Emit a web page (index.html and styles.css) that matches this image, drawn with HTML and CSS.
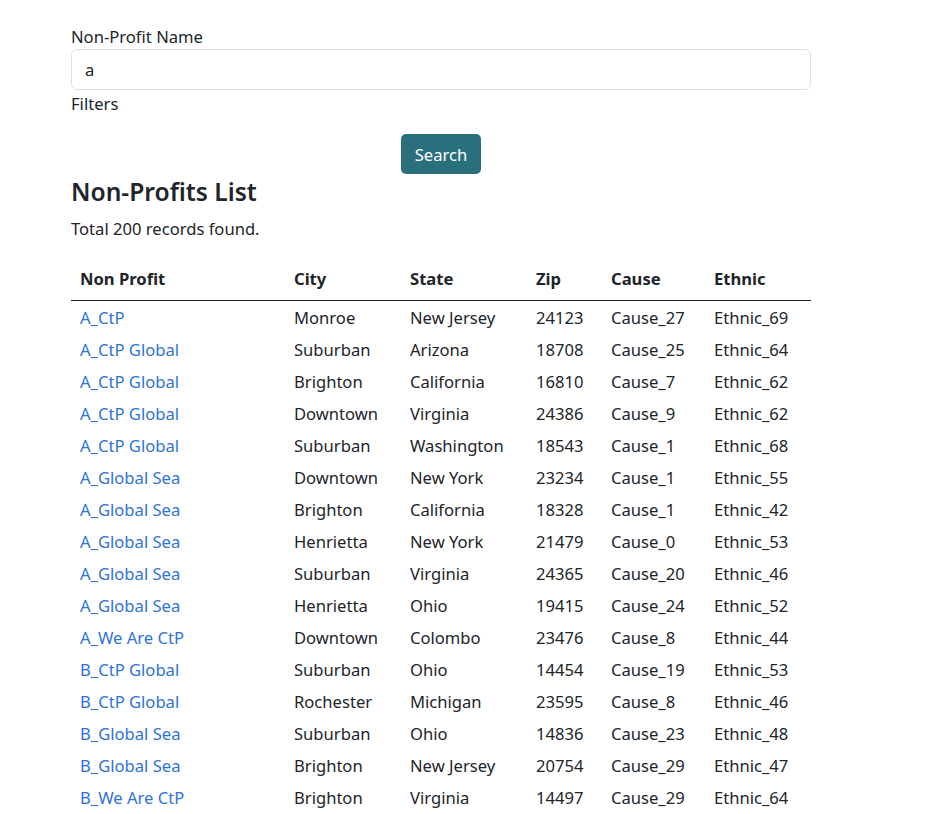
FILE: index.html
```html
<!DOCTYPE html>
<html lang="en">
<head>
<meta charset="utf-8">
<title>Non-Profits List</title>
<link rel="stylesheet" href="styles.css">
</head>
<body>
<main class="page">
  <form class="search-form">
    <label class="field-label" for="np-name">Non-Profit Name</label>
    <input class="text-input" id="np-name" type="text" value="a">
    <div class="field-label filters-label">Filters</div>
    <div class="actions">
      <button class="btn-search" type="button">Search</button>
    </div>
  </form>
  <h4 class="list-title">Non-Profits List</h4>
  <p class="count">Total 200 records found.</p>
  <table class="np-table">
    <colgroup>
      <col class="c1"><col class="c2"><col class="c3"><col class="c4"><col class="c5"><col class="c6">
    </colgroup>
    <thead>
      <tr><th>Non Profit</th><th>City</th><th>State</th><th>Zip</th><th>Cause</th><th>Ethnic</th></tr>
    </thead>
    <tbody>
      <tr><td><a href="#">A_CtP</a></td><td>Monroe</td><td>New Jersey</td><td>24123</td><td>Cause_27</td><td>Ethnic_69</td></tr>
      <tr><td><a href="#">A_CtP Global</a></td><td>Suburban</td><td>Arizona</td><td>18708</td><td>Cause_25</td><td>Ethnic_64</td></tr>
      <tr><td><a href="#">A_CtP Global</a></td><td>Brighton</td><td>California</td><td>16810</td><td>Cause_7</td><td>Ethnic_62</td></tr>
      <tr><td><a href="#">A_CtP Global</a></td><td>Downtown</td><td>Virginia</td><td>24386</td><td>Cause_9</td><td>Ethnic_62</td></tr>
      <tr><td><a href="#">A_CtP Global</a></td><td>Suburban</td><td>Washington</td><td>18543</td><td>Cause_1</td><td>Ethnic_68</td></tr>
      <tr><td><a href="#">A_Global Sea</a></td><td>Downtown</td><td>New York</td><td>23234</td><td>Cause_1</td><td>Ethnic_55</td></tr>
      <tr><td><a href="#">A_Global Sea</a></td><td>Brighton</td><td>California</td><td>18328</td><td>Cause_1</td><td>Ethnic_42</td></tr>
      <tr><td><a href="#">A_Global Sea</a></td><td>Henrietta</td><td>New York</td><td>21479</td><td>Cause_0</td><td>Ethnic_53</td></tr>
      <tr><td><a href="#">A_Global Sea</a></td><td>Suburban</td><td>Virginia</td><td>24365</td><td>Cause_20</td><td>Ethnic_46</td></tr>
      <tr><td><a href="#">A_Global Sea</a></td><td>Henrietta</td><td>Ohio</td><td>19415</td><td>Cause_24</td><td>Ethnic_52</td></tr>
      <tr><td><a href="#">A_We Are CtP</a></td><td>Downtown</td><td>Colombo</td><td>23476</td><td>Cause_8</td><td>Ethnic_44</td></tr>
      <tr><td><a href="#">B_CtP Global</a></td><td>Suburban</td><td>Ohio</td><td>14454</td><td>Cause_19</td><td>Ethnic_53</td></tr>
      <tr><td><a href="#">B_CtP Global</a></td><td>Rochester</td><td>Michigan</td><td>23595</td><td>Cause_8</td><td>Ethnic_46</td></tr>
      <tr><td><a href="#">B_Global Sea</a></td><td>Suburban</td><td>Ohio</td><td>14836</td><td>Cause_23</td><td>Ethnic_48</td></tr>
      <tr><td><a href="#">B_Global Sea</a></td><td>Brighton</td><td>New Jersey</td><td>20754</td><td>Cause_29</td><td>Ethnic_47</td></tr>
      <tr><td><a href="#">B_We Are CtP</a></td><td>Brighton</td><td>Virginia</td><td>14497</td><td>Cause_29</td><td>Ethnic_64</td></tr>
    </tbody>
  </table>
</main>
</body>
</html>
```

FILE: styles.css
```css
* { box-sizing: border-box; }

html, body {
  margin: 0;
  padding: 0;
  background: #ffffff;
}

body {
  font-family: "Noto Sans", "Open Sans", sans-serif;
  font-size: 16.6px;
  line-height: 24px;
  color: #212529;
}

.page {
  width: 740px;
  margin-left: 71px;
  padding-top: 25px;
}

.search-form {
  margin: 0;
}

.field-label {
  display: block;
  line-height: 24px;
}

.text-input {
  display: block;
  width: 100%;
  height: 41px;
  margin: 0;
  padding: 0 13px;
  font-family: inherit;
  font-size: 16.6px;
  color: #212529;
  background: #ffffff;
  border: 1px solid #dee2e6;
  border-radius: 6px;
  outline: none;
}

.filters-label {
  margin-top: 2px;
}

.actions {
  display: flex;
  justify-content: center;
  margin-top: 18px;
}

.btn-search {
  width: 80px;
  height: 40px;
  padding: 0;
  font-family: inherit;
  font-size: 16.6px;
  color: #ffffff;
  background: #2a6f7c;
  border: none;
  border-radius: 5px;
  cursor: pointer;
}

.list-title {
  margin: 4px 0 0;
  font-size: 24.6px;
  line-height: 28px;
  font-weight: 600;
}

.count {
  margin: 11px 0 18px;
}

.np-table {
  width: 740px;
  border-collapse: collapse;
  table-layout: fixed;
}

.c1 { width: 214px; }
.c2 { width: 116px; }
.c3 { width: 126px; }
.c4 { width: 75px; }
.c5 { width: 103px; }
.c6 { width: 106px; }

.np-table th {
  text-align: left;
  font-weight: 700;
  padding: 8px 8px 9px 9px;
  border-bottom: 1px solid #212529;
}

.np-table td {
  padding: 4px 8px 4px 9px;
  white-space: nowrap;
}

.np-table tbody tr:first-child td {
  padding-top: 5px;
}

.np-table a {
  color: #2f72dc;
  text-decoration: none;
}
```
